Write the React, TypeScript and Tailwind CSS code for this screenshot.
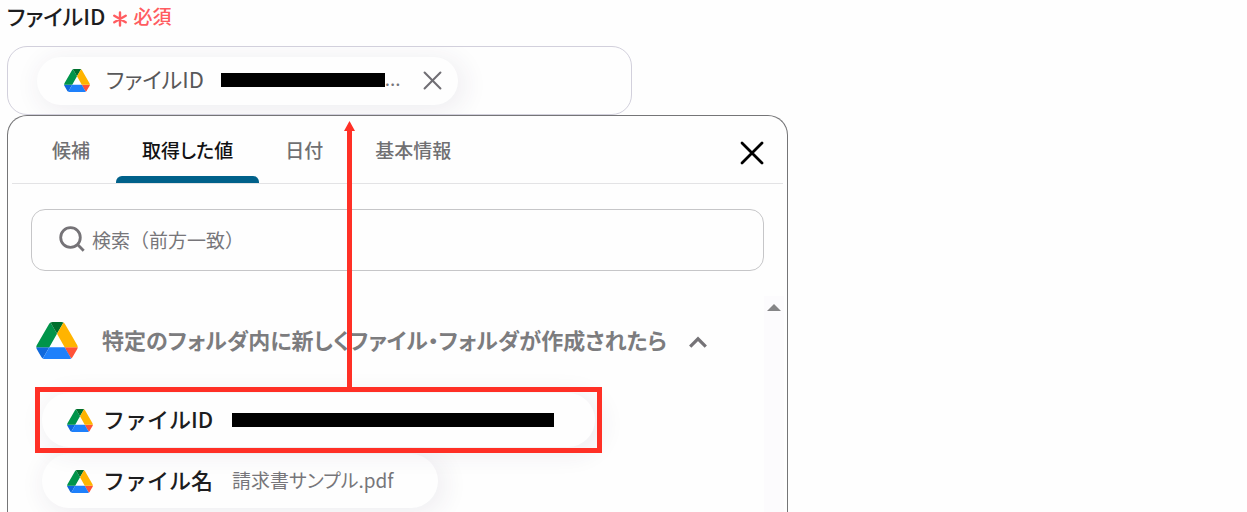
import { useState } from "react";

function DriveLogo({ className }: { className: string }) {
  return (
    <svg viewBox="0 0 87.3 78" className={className} aria-hidden="true">
      <path fill="#0f68dc" d="m6.6 66.85 3.85 6.65c.8 1.4 1.95 2.5 3.3 3.3l13.75-23.8h-27.5c0 1.55.4 3.1 1.2 4.5z" />
      <path fill="#00944a" d="m43.65 25-13.75-23.8c-1.35.8-2.5 1.9-3.3 3.3l-25.4 44a9.06 9.06 0 0 0 -1.2 4.5h27.5z" />
      <path fill="#ff5238" d="m73.55 76.8c1.35-.8 2.5-1.9 3.3-3.3l1.6-2.75 7.65-13.25c.8-1.4 1.2-2.95 1.2-4.5h-27.5l5.85 11.5z" />
      <path fill="#00702e" d="m43.65 25 13.75-23.8c-1.35-.8-2.9-1.2-4.5-1.2h-18.5c-1.6 0-3.15.45-4.5 1.2z" />
      <path fill="#1e80fb" d="m59.8 53h-32.3l-13.75 23.8c1.35.8 2.9 1.2 4.5 1.2h50.8c1.6 0 3.15-.45 4.5-1.2z" />
      <path fill="#ffb400" d="m73.4 26.5-12.7-22c-.8-1.4-1.95-2.5-3.3-3.3l-13.75 23.8 16.15 28h27.45c0-1.55-.4-3.1-1.2-4.5z" />
    </svg>
  );
}

function Cross({ className, width }: { className: string; width: number }) {
  return (
    <svg viewBox="0 0 24 24" className={className} fill="none" stroke="currentColor" strokeWidth={width} strokeLinecap="round" aria-hidden="true">
      <path d="M2 2 22 22M22 2 2 22" />
    </svg>
  );
}

const tabs = ["候補", "取得した値", "日付", "基本情報"];

export default function App() {
  const [active, setActive] = useState("取得した値");
  const [query, setQuery] = useState("");

  return (
    <main className="h-screen overflow-hidden bg-[#fefefe] px-[7px] font-['Noto_Sans_CJK_JP',sans-serif] text-[#1d1d1f]">
      <h1 className="flex h-[46px] items-start gap-2 font-medium">
        <span className="text-[22px] leading-[30px] [font-feature-settings:'palt']">ファイルID</span>
        <span className="flex items-center gap-1.5 text-[19px] leading-8 text-[#ff5c60]">
          <svg viewBox="0 0 14 16" className="mt-1.5 h-4 w-3.5" fill="none" stroke="currentColor" strokeWidth="2.4" strokeLinecap="round" aria-hidden="true">
            <path d="M7 1.5v13M1.3 4.7l11.4 6.6M12.7 4.7 1.3 11.3" />
          </svg>
          必須
        </span>
      </h1>

      <div className="flex w-full max-w-[625px] overflow-hidden rounded-[20px] border border-[#d2d0dc] pt-[10px] pb-[9px] pl-[29px]">
        <div className="flex h-12 items-center rounded-full bg-[#fefefe] pr-4 pb-0.5 pl-[27px] shadow-[4px_4px_24px_4px_rgba(60,40,90,0.07)]">
          <DriveLogo className="h-[23px] w-[26px]" />
          <span className="ml-4 pb-1 text-[22px] leading-8 text-[#58585a] [font-feature-settings:'palt']">ファイルID</span>
          <span className="ml-[17px] h-3.5 w-[164px] bg-black" />
          <span className="pb-1 text-[19px] leading-8 text-[#77767a]">...</span>
          <button type="button" aria-label="値を削除" className="ml-[22px] text-[#706e74]">
            <Cross className="size-[19px]" width={2.6} />
          </button>
        </div>
      </div>

      <section className="relative w-full max-w-[781px] rounded-t-[20px] border border-b-0 border-[#757577]">
        <div className="mx-1 flex items-start justify-between border-b border-[#e3e3e5] pr-[19px] pl-[14px]">
          <div role="tablist" className="flex">
            {tabs.map((tab) => (
              <button
                key={tab}
                type="button"
                role="tab"
                aria-selected={tab === active}
                onClick={() => setActive(tab)}
                className={`flex flex-col text-[19px] leading-8 font-medium [font-feature-settings:'palt'] ${tab === active ? "text-[#111113]" : "text-[#707072]"}`}
              >
                <span className="px-[26px] pt-[18px] pb-[10px]">{tab}</span>
                <span className={`h-[7px] w-full rounded-t-md ${tab === active ? "bg-[#00618a]" : ""}`} />
              </button>
            ))}
          </div>
          <button type="button" aria-label="閉じる" className="mt-[25px] text-black">
            <Cross className="size-6" width={2.8} />
          </button>
        </div>

        <label className="mx-[23px] mt-[25px] flex h-[62px] items-center gap-[7px] rounded-[14px] border border-[#c6c6c8] pl-[27px]">
          <svg viewBox="0 0 26 26" className="-mt-0.5 size-[26px]" fill="none" stroke="#757377" strokeWidth="2.8" aria-hidden="true">
            <circle cx="11.5" cy="11.5" r="9.8" />
            <path d="m18.3 18.3 6.4 6.4" />
          </svg>
          <input
            type="text"
            aria-label="検索"
            placeholder="検索（前方一致）"
            value={query}
            onChange={(event) => setQuery(event.target.value)}
            className="min-w-0 flex-1 bg-transparent text-[19px] leading-8 outline-none placeholder:text-[#77767a]"
          />
        </label>

        <div className="mt-[25px] mr-[3px] flex">
          <div className="flex-1 pb-8 pl-7">
            <button type="button" aria-expanded="true" className="flex items-center pt-[25px] text-[22px] leading-9 font-bold text-[#7c7c7e]">
              <DriveLogo className="h-[37px] w-[42px]" />
              <span className="ml-6 pb-0.5 whitespace-nowrap [font-feature-settings:'palt']">特定のフォルダ内に新しくファイル・フォルダが作成されたら</span>
              <svg viewBox="0 0 18 12" className="mt-1 ml-[22px] h-3 w-[18px]" fill="none" stroke="#757377" strokeWidth="3.2" aria-hidden="true">
                <path d="m1.2 10.6 7.8-7.8 7.8 7.8" />
              </svg>
            </button>

            <ul className="mt-[34px] flex flex-col items-start gap-[7px] pl-1.5">
              <li className="relative">
                <button type="button" className="flex h-[54px] w-[553px] items-center rounded-full bg-[#fefefe] pl-[25px] shadow-[4px_4px_24px_4px_rgba(60,40,90,0.07)]">
                  <DriveLogo className="h-[23px] w-[26px]" />
                  <span className="ml-[10px] pb-1 text-[22px] leading-8 font-medium">ファイルID</span>
                  <span className="ml-[19px] h-3.5 w-[322px] bg-black" />
                </button>
                {/* Callout linking the candidate to the field above */}
                <span className="pointer-events-none absolute -inset-x-[7px] -inset-y-1.5 z-10 border-[5px] border-[#ff3026]" />
                <svg viewBox="0 0 12 267" className="pointer-events-none absolute bottom-[59px] left-[302px] z-10 h-[267px] w-3" fill="#ff3026" aria-hidden="true">
                  <path d="M5.5 0 11 10H8V267H3V10H0z" />
                </svg>
              </li>
              <li>
                <button type="button" className="flex h-[54px] items-center rounded-full bg-[#fefefe] pr-11 pl-[25px] shadow-[4px_4px_24px_4px_rgba(60,40,90,0.07)]">
                  <DriveLogo className="h-[23px] w-[26px]" />
                  <span className="ml-[10px] pb-1 text-[22px] leading-8 font-medium">ファイル名</span>
                  <span className="ml-[19px] pb-0.5 text-[19px] leading-8 text-[#77767a] [font-feature-settings:'palt']">請求書サンプル.pdf</span>
                </button>
              </li>
            </ul>
          </div>
          <div className="flex w-5 justify-center bg-[#fcfbfd] pt-2">
            <svg viewBox="0 0 14 7" className="h-[7px] w-3.5" fill="#858587" aria-hidden="true">
              <path d="M7 0 14 7H0z" />
            </svg>
          </div>
        </div>
      </section>
    </main>
  );
}
